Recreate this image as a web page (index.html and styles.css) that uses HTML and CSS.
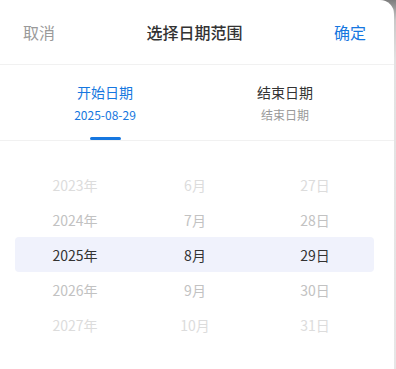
FILE: index.html
```html
<!DOCTYPE html>
<html lang="zh-CN">
<head>
<meta charset="utf-8">
<title>选择日期范围</title>
<link rel="stylesheet" href="styles.css">
</head>
<body>
<div class="panel">
  <div class="header">
    <span class="cancel">取消</span>
    <span class="title">选择日期范围</span>
    <span class="confirm">确定</span>
  </div>
  <div class="tabs">
    <div class="tab active">
      <div class="tab-title">开始日期</div>
      <div class="tab-sub">2025-08-29</div>
      <div class="tab-bar"></div>
    </div>
    <div class="tab">
      <div class="tab-title">结束日期</div>
      <div class="tab-sub">结束日期</div>
      <div class="tab-bar"></div>
    </div>
  </div>
  <div class="picker">
    <div class="row far"><span>2023年</span><span>6月</span><span>27日</span></div>
    <div class="row near"><span>2024年</span><span>7月</span><span>28日</span></div>
    <div class="row selected"><span>2025年</span><span>8月</span><span>29日</span></div>
    <div class="row near"><span>2026年</span><span>9月</span><span>30日</span></div>
    <div class="row far"><span>2027年</span><span>10月</span><span>31日</span></div>
  </div>
</div>
</body>
</html>
```
FILE: styles.css
```css
* { box-sizing: border-box; }
html, body { margin: 0; padding: 0; }
body {
  width: 396px;
  height: 369px;
  overflow: hidden;
  background: linear-gradient(to bottom, #7d7d7d 0px, #c8c8c8 20px, #e2e2e2 60px, #e6e6e6 100%);
  font-family: "Noto Sans CJK SC", "Noto Sans", sans-serif;
}
.panel {
  width: 394px;
  height: 369px;
  background: #fff;
  border-top-right-radius: 14px;
}
.header {
  height: 65px;
  display: flex;
  align-items: center;
  justify-content: space-between;
  padding: 0 28px 1px 23px;
  border-bottom: 1px solid #f1f1f1;
  font-size: 16px;
  line-height: 22px;
}
.cancel { color: #9a9a9a; width: 34px; }
.confirm { color: #1677e0; width: 34px; text-align: right; }
.title { color: #333; font-weight: 500; }
.tabs {
  display: grid;
  grid-template-columns: 1fr 1fr;
  padding: 0 19px 0 15px;
  border-bottom: 1px solid #f1f1f1;
}
.tab {
  display: flex;
  flex-direction: column;
  align-items: center;
  padding-top: 17px;
}
.tab-title {
  font-size: 14px;
  line-height: 20px;
  color: #333;
}
.tab-sub {
  margin-top: 4px;
  font-size: 12px;
  line-height: 18px;
  color: #9a9a9a;
}
.tab-bar {
  margin-top: 13px;
  width: 31px;
  height: 3px;
  border-radius: 2px;
  background: transparent;
}
.tab.active .tab-title,
.tab.active .tab-sub { color: #1677e0; }
.tab.active .tab-bar { background: #1677e0; }
.picker {
  padding: 26px 20px 0 15px;
}
.row {
  display: grid;
  grid-template-columns: 120px 120px 120px;
  height: 35px;
  align-items: center;
  font-size: 14px;
  border-radius: 4px;
}
.row span { text-align: center; }
.row.far { color: #dcdcdc; }
.row.near { color: #c2c2c2; }
.row.selected {
  color: #333;
  background: #f0f2fc;
}
```
